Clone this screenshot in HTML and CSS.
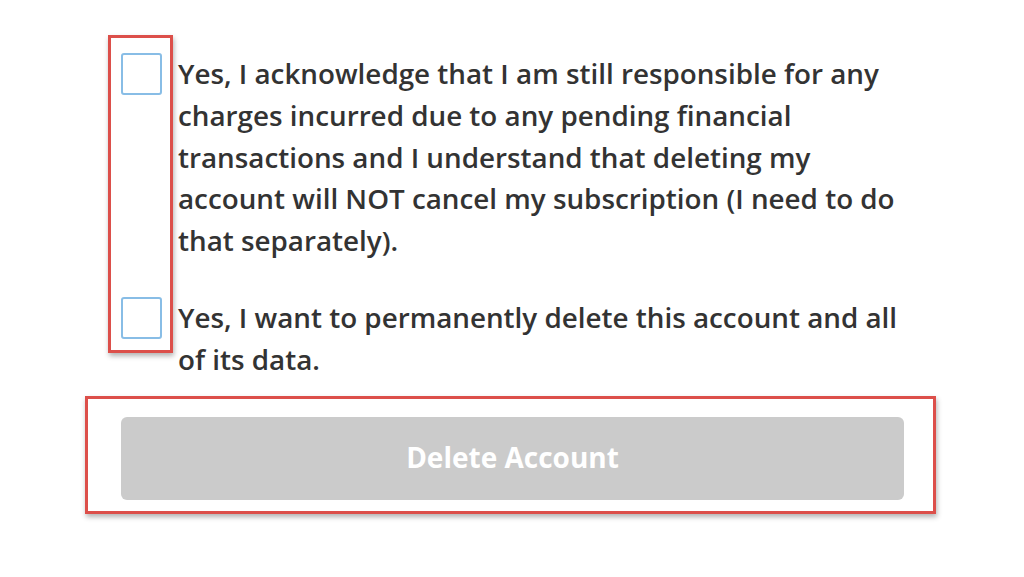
FILE: index.html
```html
<!DOCTYPE html>
<html>
<head>
<meta charset="utf-8">
<link rel="stylesheet" href="styles.css">
</head>
<body>
<div class="page">
  <div class="item">
    <span class="check"></span>
    <p class="label">Yes, I acknowledge that I am still responsible for any charges incurred due to any pending financial transactions and I understand that deleting my account will NOT cancel my subscription (I need to do that separately).</p>
  </div>
  <div class="item second">
    <span class="check"></span>
    <p class="label">Yes, I want to permanently delete this account and all of its data.</p>
  </div>
  <button class="delete">Delete Account</button>
</div>
<div class="mark mark-checks"></div>
<div class="mark mark-button"></div>
</body>
</html>
```
FILE: styles.css
```css
html, body {
  margin: 0;
  padding: 0;
  background: #ffffff;
}
body {
  font-family: "Open Sans", "Liberation Sans", sans-serif;
  color: #333333;
}
.page {
  padding: 53px 0 0 121px;
  width: 783px;
}
.item {
  display: flex;
  gap: 16px;
  align-items: flex-start;
}
.item.second {
  margin-top: 35px;
}
.check {
  flex: none;
  width: 41px;
  height: 42px;
  box-sizing: border-box;
  border: 2px solid #88bde6;
  border-radius: 3px;
  background: #fff;
}
.label {
  margin: 0;
  width: 726px;
  font-size: 27.8px;
  font-weight: 600;
  line-height: 41.75px;
}
.delete {
  display: block;
  margin-top: 37px;
  width: 783px;
  height: 83px;
  border: none;
  border-radius: 6px;
  background: #cbcbcb;
  color: #ffffff;
  font-family: "Open Sans", "Liberation Sans", sans-serif;
  font-weight: 700;
  font-size: 28px;
  padding: 0 0 4px 0;
}
.mark {
  position: absolute;
  box-sizing: border-box;
  border: 3px solid #dc4f4a;
  box-shadow: 1px 3px 5px rgba(0, 0, 0, 0.3);
}
.mark-checks {
  left: 108px;
  top: 35px;
  width: 65px;
  height: 318px;
}
.mark-button {
  left: 85px;
  top: 396px;
  width: 851px;
  height: 118px;
}
```
